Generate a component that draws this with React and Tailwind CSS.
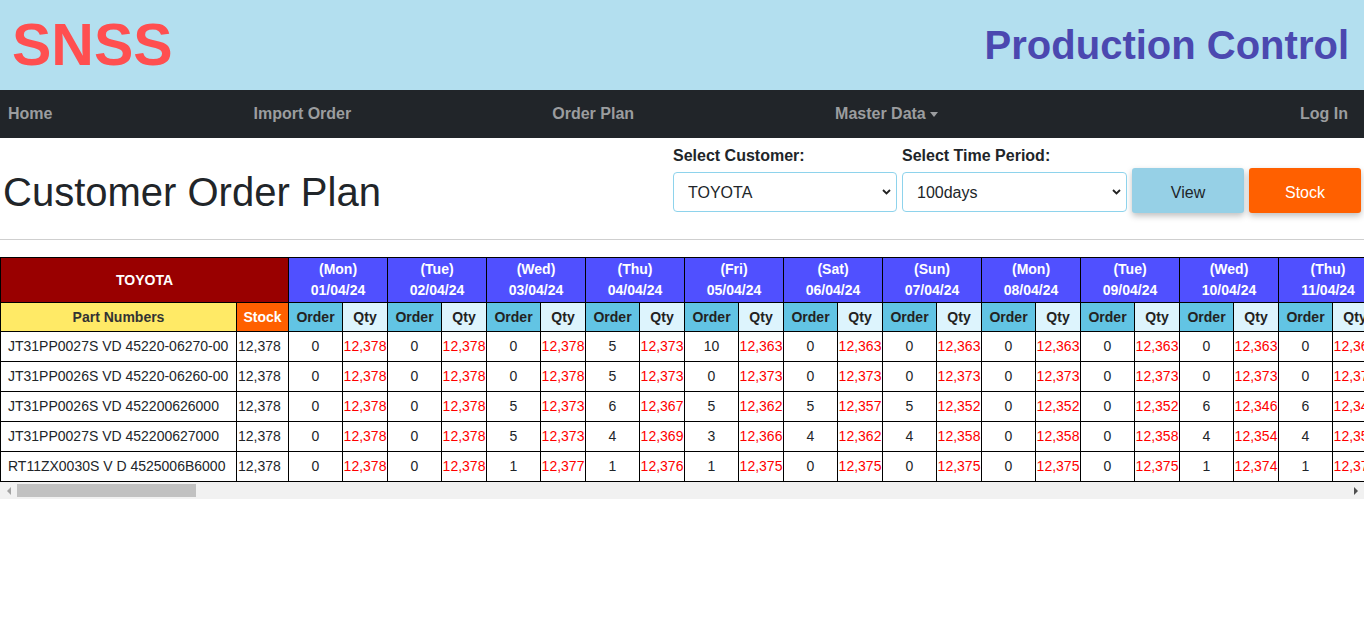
import React from 'react';

const DAY_NAMES = ['Sun', 'Mon', 'Tue', 'Wed', 'Thu', 'Fri', 'Sat'];
const DAYS = 100;

const PARTS = [
  { name: 'JT31PP0027S VD 45220-06270-00', stock: 12378, orders: [0, 0, 0, 5, 10, 0, 0, 0, 0, 0, 0] },
  { name: 'JT31PP0026S VD 45220-06260-00', stock: 12378, orders: [0, 0, 0, 5, 0, 0, 0, 0, 0, 0, 0] },
  { name: 'JT31PP0026S VD 452200626000', stock: 12378, orders: [0, 0, 5, 6, 5, 5, 5, 0, 0, 6, 6] },
  { name: 'JT31PP0027S VD 452200627000', stock: 12378, orders: [0, 0, 5, 4, 3, 4, 4, 0, 0, 4, 4] },
  { name: 'RT11ZX0030S V D 4525006B6000', stock: 12378, orders: [0, 0, 1, 1, 1, 0, 0, 0, 0, 1, 1] },
];

function buildDays() {
  const start = Date.UTC(2024, 3, 1);
  const list = [];
  for (let i = 0; i < DAYS; i++) {
    const d = new Date(start + i * 86400000);
    const dd = String(d.getUTCDate()).padStart(2, '0');
    const mm = String(d.getUTCMonth() + 1).padStart(2, '0');
    const yy = String(d.getUTCFullYear()).slice(2);
    list.push({ name: DAY_NAMES[d.getUTCDay()], date: `${dd}/${mm}/${yy}` });
  }
  return list;
}

function buildRows() {
  return PARTS.map((p) => {
    let qty = p.stock;
    const cells = [];
    for (let i = 0; i < DAYS; i++) {
      const order = i < p.orders.length ? p.orders[i] : p.orders[3 + ((i - 3) % 8)];
      qty -= order;
      cells.push({ order, qty });
    }
    return { ...p, cells };
  });
}

const fmt = (n) => n.toLocaleString('en-US');

function Chevron() {
  return (
    <svg width="9" height="6" viewBox="0 0 9 6" className="pointer-events-none absolute right-[6px] top-1/2 -translate-y-1/2">
      <path d="M1 1l3.5 3.5L8 1" fill="none" stroke="#222" strokeWidth="1.8" />
    </svg>
  );
}

function Select({ label, value, width }) {
  return (
    <div className="flex flex-col">
      <label className="mb-[4px] text-[16px] font-bold leading-6 text-[#212529]">{label}</label>
      <div className={`relative mb-[1px] ${width}`}>
        <select
          defaultValue={value}
          className="h-[40px] w-full appearance-none rounded-[4px] border border-[#8ed3ec] bg-white pl-[14px] pt-[1px] text-[16px] text-[#212529] outline-none"
        >
          <option>{value}</option>
        </select>
        <Chevron />
      </div>
    </div>
  );
}

// the page's horizontal scrollbar, drawn so it shows in the screenshot
function ScrollBar() {
  return (
    <div className="flex h-[17px] items-center bg-[#f1f1f1]">
      <div className="flex w-[17px] justify-center">
        <span className="h-0 w-0 border-y-[4px] border-r-[4px] border-y-transparent border-r-[#a3a3a3]" />
      </div>
      <div className="h-[13px] w-[179px] bg-[#c1c1c1]" />
      <div className="flex-1" />
      <div className="flex w-[17px] justify-center">
        <span className="h-0 w-0 border-y-[4px] border-l-[4px] border-y-transparent border-l-[#505050]" />
      </div>
    </div>
  );
}

export default function App() {
  const days = buildDays();
  const rows = buildRows();

  return (
    <div className="min-h-screen bg-white font-['Liberation_Sans',Arial,sans-serif] text-[#212529]">
      <header className="flex h-[90px] items-center justify-between bg-[#b3dfef] pl-[12px] pr-[15px]">
        <h1 className="text-[59px] font-bold leading-none text-[#ff4f50]">SNSS</h1>
        <h2 className="text-[40px] font-bold leading-none text-[#4b48b0]">Production Control</h2>
      </header>

      <nav className="flex h-[48px] items-center bg-[#212529] pl-[8px] pr-[16px] text-[16px] font-bold text-[#9b9d9f]">
        <div className="flex items-center gap-[201px]">
          <span>Home</span>
          <span>Import Order</span>
          <span>Order Plan</span>
          <span className="flex items-center">
            Master Data
            <span className="ml-[4px] inline-block h-0 w-0 border-x-[4px] border-t-[5px] border-x-transparent border-t-[#9b9d9f]" />
          </span>
        </div>
        <span className="ml-auto">Log In</span>
      </nav>

      <section className="flex h-[101px] items-start justify-between pl-[3px] pr-[3px] pt-[6px]">
        <h1 className="mt-[24px] text-[40px] font-normal leading-[48px] text-[#212529]">Customer Order Plan</h1>
        <div className="flex items-end gap-[5px]">
          <Select label="Select Customer:" value="TOYOTA" width="w-[224px]" />
          <Select label="Select Time Period:" value="100days" width="w-[225px]" />
          <button className="h-[45px] w-[112px] rounded-[3px] bg-[#96d0e6] pt-[5px] text-[16px] text-[#212529] shadow-[0_3px_6px_rgba(0,0,0,0.25)]">
            View
          </button>
          <button className="h-[45px] w-[112px] rounded-[3px] bg-[#ff6000] pt-[5px] text-[16px] text-white shadow-[0_3px_6px_rgba(0,0,0,0.25)]">
            Stock
          </button>
        </div>
      </section>

      <div className="border-t border-[#cfcfcf]" />

      <div className="mt-[17px]">
        <div className="overflow-x-auto [scrollbar-width:none]">
          <table className="w-[10188px] table-fixed border-collapse text-[14px]">
            <colgroup>
              <col className="w-[236px]" />
              <col className="w-[52px]" />
              {days.map((d, i) => (
                <React.Fragment key={i}>
                  <col className="w-[54px]" />
                  <col className="w-[45px]" />
                </React.Fragment>
              ))}
            </colgroup>
            <thead>
              <tr className="h-[45px]">
                <th colSpan={2} className="border border-black bg-[#990000] font-bold text-white">
                  TOYOTA
                </th>
                {days.map((d, i) => (
                  <th key={i} colSpan={2} className="border border-black bg-[#5050ff] pb-[1px] font-bold leading-[21px] text-white">
                    <div>({d.name})</div>
                    <div>{d.date}</div>
                  </th>
                ))}
              </tr>
              <tr className="h-[29px]">
                <th className="border border-black bg-[#ffea66] font-bold text-[#333]">Part Numbers</th>
                <th className="border border-black bg-[#ff6000] px-0 font-bold text-white">Stock</th>
                {days.map((d, i) => (
                  <React.Fragment key={i}>
                    <th className="border border-black bg-[#62c4e4] px-0 font-bold text-[#222]">Order</th>
                    <th className="border border-black bg-[#ddf4fd] px-0 font-bold text-[#222]">Qty</th>
                  </React.Fragment>
                ))}
              </tr>
            </thead>
            <tbody>
              {rows.map((r) => (
                <tr key={r.name} className="h-[30px]">
                  <td className="whitespace-nowrap border border-black pl-[7px] text-left">{r.name}</td>
                  <td className="border border-black pl-[1px] text-left">{fmt(r.stock)}</td>
                  {r.cells.map((c, i) => (
                    <React.Fragment key={i}>
                      <td className="border border-black text-center">{c.order}</td>
                      <td className="whitespace-nowrap border border-black px-0 text-center text-[#ff0000]">{fmt(c.qty)}</td>
                    </React.Fragment>
                  ))}
                </tr>
              ))}
            </tbody>
          </table>
        </div>
        <ScrollBar />
      </div>
    </div>
  );
}
